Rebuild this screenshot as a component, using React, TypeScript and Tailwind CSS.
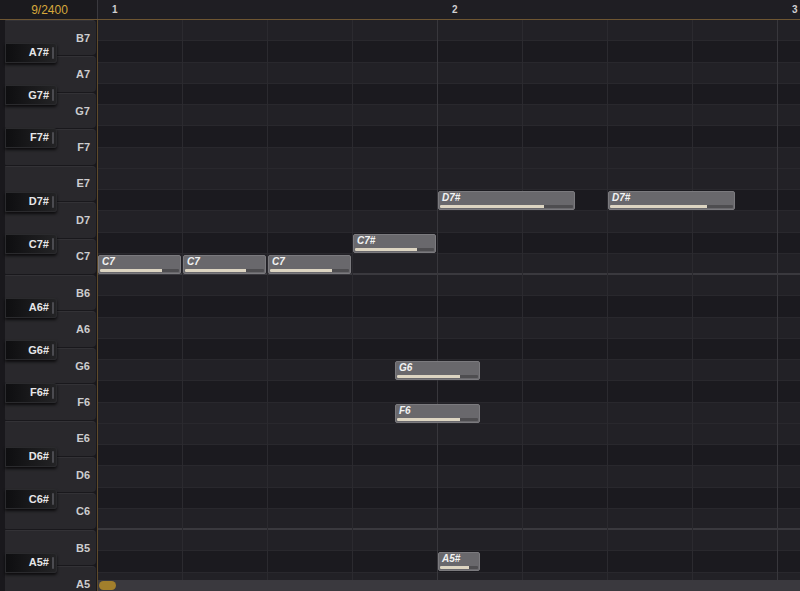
import React from "react";

const ROW_H = 21.25;
const KEY_H = 255 / 7;

const rows = [
  "B7","A7#","A7","G7#","G7","F7#","F7","E7","D7#","D7","C7#","C7",
  "B6","A6#","A6","G6#","G6","F6#","F6","E6","D6#","D6","C6#","C6",
  "B5","A5#","A5",
];

const whiteKeys = ["B7","A7","G7","F7","E7","D7","C7","B6","A6","G6","F6","E6","D6","C6","B5","A5"];

type Note = { label: string; row: number; left: number; width: number; vel: number };

const notes: Note[] = [
  { label: "C7", row: 11, left: 0, width: 83, vel: 78 },
  { label: "C7", row: 11, left: 85, width: 83, vel: 77 },
  { label: "C7", row: 11, left: 170, width: 83, vel: 78 },
  { label: "C7#", row: 10, left: 255, width: 83, vel: 79 },
  { label: "D7#", row: 8, left: 340, width: 137, vel: 78 },
  { label: "D7#", row: 8, left: 510, width: 127, vel: 79 },
  { label: "G6", row: 16, left: 297, width: 85, vel: 78 },
  { label: "F6", row: 18, left: 297, width: 85, vel: 78 },
  { label: "A5#", row: 25, left: 340, width: 42, vel: 75 },
];

const beats = Array.from({ length: 9 }, (_, i) => i);

export default function App() {
  return (
    <div
      className="w-[800px] h-[591px] overflow-hidden bg-[#1a191d] flex flex-col select-none"
      style={{ fontFamily: '"Liberation Sans", Arial, sans-serif' }}
    >
      {/* Header */}
      <div className="h-[20px] shrink-0 flex border-b border-[#6e5632]">
        <div className="w-[98px] shrink-0 flex items-center justify-center border-r border-[#3a393e] bg-[#1b1a1e]">
          <span className="text-[12px] leading-none text-[#d6a83c] pl-[2px]">9/2400</span>
        </div>
        <div className="flex-1 flex bg-[#1f1e23] overflow-hidden">
          {[1, 2, 3].map((n) => (
            <div key={n} className="w-[340px] shrink-0 flex items-center pl-[14px]">
              <span className="text-[10px] font-bold leading-none text-[#cfcfd2]">{n}</span>
            </div>
          ))}
        </div>
      </div>

      {/* Body */}
      <div className="flex-1 flex min-h-0">
        {/* Keyboard */}
        <div className="w-[98px] shrink-0 border-r border-[#5e4a2b] bg-[#19181c] relative overflow-hidden pl-[5px] pr-[1px]">
          <div className="flex flex-col">
            {whiteKeys.map((k) => (
              <div key={k} className="shrink-0 pb-[1px]" style={{ height: KEY_H }}>
                <div className="h-full rounded-r-[4px] rounded-l-[1px] bg-[#29282c] border-t border-[#333236] flex items-center justify-end pr-[6px]">
                  <span className="text-[11px] font-bold text-[#cdcdcf] leading-none">{k}</span>
                </div>
              </div>
            ))}
          </div>
          {rows.map((r, i) =>
            r.endsWith("#") ? (
              <div
                key={r}
                className="absolute left-[5px] w-[52px] h-[20px] rounded-r-[3px] bg-gradient-to-r from-[#0e0e10] via-[#19191b] to-[#232325] border border-[#2a2a2d] shadow-[0_2px_3px_rgba(0,0,0,0.7)] flex items-center justify-end pr-[7px]"
                style={{ top: i * ROW_H + 1.5 }}
              >
                <span className="text-[11px] font-bold text-[#e6e6e8] leading-none">{r}</span>
                <div className="absolute right-[2px] top-[3px] bottom-[3px] w-[2px] rounded-full bg-[#4b4b50]" />
              </div>
            ) : null
          )}
        </div>

        {/* Grid */}
        <div className="flex-1 relative overflow-hidden">
          <div className="flex flex-col">
            {rows.map((r) => {
              const black = r.endsWith("#");
              const isC = r.startsWith("C") && !black;
              return (
                <div
                  key={r}
                  className={
                    "shrink-0 " +
                    (black ? "bg-[#1b1a1f] " : "bg-[#222126] ") +
                    (isC ? "border-b-2 border-[#3a393e]" : "border-b border-[#29282d]")
                  }
                  style={{ height: ROW_H }}
                />
              );
            })}
          </div>

          {/* Vertical beat lines */}
          <div className="absolute inset-0 flex pointer-events-none">
            {beats.map((b) => (
              <div
                key={b}
                className={
                  "w-[85px] shrink-0 border-r " +
                  (b % 4 === 3 ? "border-[#38373c]" : "border-[#2b2a2f]")
                }
              />
            ))}
          </div>

          {/* Notes */}
          {notes.map((n, i) => (
            <div
              key={i}
              className="absolute h-[19px] rounded-[2px] bg-[#69686c] border border-[#7b7a7e] flex flex-col"
              style={{ top: n.row * ROW_H + 1, left: n.left, width: n.width }}
            >
              <div className="flex-1 pl-[3px] pt-[1px]">
                <span className="text-[10px] font-bold italic text-[#f2f2f2] leading-none block">{n.label}</span>
              </div>
              <div className="h-[3px] mx-[1px] mb-[1px] bg-[#4e4d50] rounded-[1px] overflow-hidden">
                <div className="h-full bg-[#ddd5c2]" style={{ width: `${n.vel}%` }} />
              </div>
            </div>
          ))}

          {/* Scrollbar */}
          <div className="absolute left-0 right-0 bottom-0 h-[11px] bg-[#3a393e] flex items-center pl-[1px]">
            <div className="w-[17px] h-[9px] rounded-full bg-[#a27f2c]" />
          </div>
        </div>
      </div>
    </div>
  );
}
